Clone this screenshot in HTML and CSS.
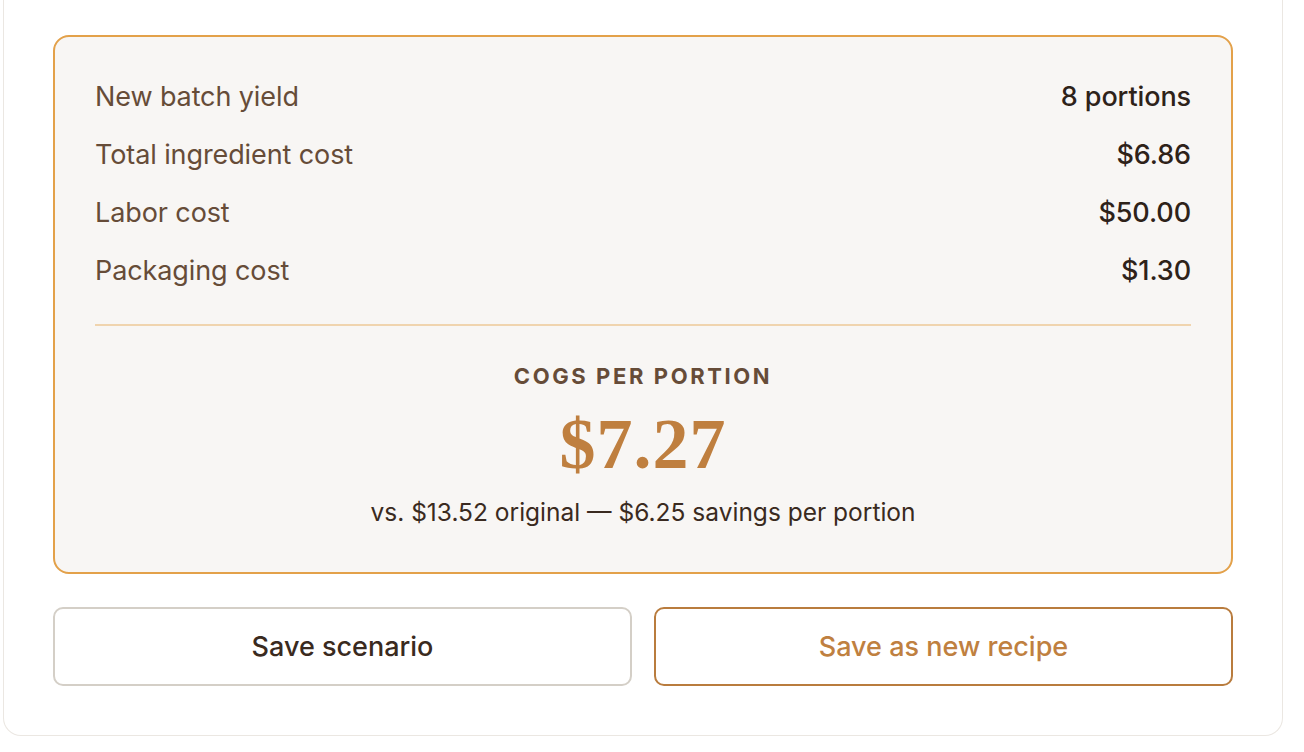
FILE: index.html
```html
<!DOCTYPE html>
<html>
<head>
<meta charset="utf-8">
<link rel="stylesheet" href="styles.css">
</head>
<body>
<div class="card">
  <div class="summary">
    <div class="rows">
      <div class="row"><span class="label">New batch yield</span><span class="value">8 portions</span></div>
      <div class="row"><span class="label">Total ingredient cost</span><span class="value">$6.86</span></div>
      <div class="row"><span class="label">Labor cost</span><span class="value">$50.00</span></div>
      <div class="row"><span class="label">Packaging cost</span><span class="value">$1.30</span></div>
    </div>
    <div class="divider"></div>
    <div class="result">
      <div class="result-title">COGS PER PORTION</div>
      <div class="result-value">$7.27</div>
      <div class="result-note">vs. $13.52 original — $6.25 savings per portion</div>
    </div>
  </div>
  <div class="actions">
    <button class="btn btn-secondary">Save scenario</button>
    <button class="btn btn-primary">Save as new recipe</button>
  </div>
</div>
</body>
</html>
```

FILE: styles.css
```css
html, body {
  margin: 0;
  padding: 0;
  background: #ffffff;
}
body {
  font-family: "Inter", "Noto Sans", sans-serif;
  padding-left: 3px;
  width: 1280px;
}
.card {
  box-sizing: border-box;
  width: 1280px;
  border: 1.5px solid #ebe7e2;
  border-top: none;
  border-radius: 0 0 18px 18px;
  padding: 35px 49px 49px 49px;
  background: #fff;
}
.summary {
  border: 2px solid #e3a14a;
  border-radius: 16px;
  background: #f8f6f4;
  padding: 38px 40px 44px 40px;
}
.rows {
  display: flex;
  flex-direction: column;
  gap: 16px;
}
.row {
  display: flex;
  justify-content: space-between;
  align-items: center;
  height: 42px;
  font-size: 27px;
  letter-spacing: -0.1px;
}
.label {
  color: #664c38;
}
.value {
  color: #2e2219;
  font-weight: 500;
}
.divider {
  height: 2px;
  background: #f0d4ae;
  margin-top: 33px;
}
.result {
  display: flex;
  flex-direction: column;
  align-items: center;
  padding-top: 36px;
}
.result-title {
  font-size: 22px;
  font-weight: 700;
  letter-spacing: 2.6px;
  color: #664c38;
  line-height: 28px;
}
.result-value {
  font-family: "Liberation Serif", "DejaVu Serif", serif;
  font-weight: 700;
  font-size: 72px;
  letter-spacing: 1px;
  color: #bf7f3f;
  line-height: 84px;
  margin-top: 12px;
}
.result-note {
  font-size: 24.5px;
  color: #3a2a20;
  line-height: 32px;
  margin-top: 10px;
}
.actions {
  display: flex;
  gap: 22px;
  margin-top: 33px;
}
.btn {
  flex: 1;
  height: 79px;
  border-radius: 10px;
  background: #fff;
  font-family: "Inter", "Noto Sans", sans-serif;
  font-size: 27px;
  font-weight: 500;
  cursor: pointer;
}
.btn-secondary {
  border: 2px solid #d4cfc7;
  color: #3a2a20;
}
.btn-primary {
  border: 2px solid #b97c3e;
  color: #bf8040;
}
```
